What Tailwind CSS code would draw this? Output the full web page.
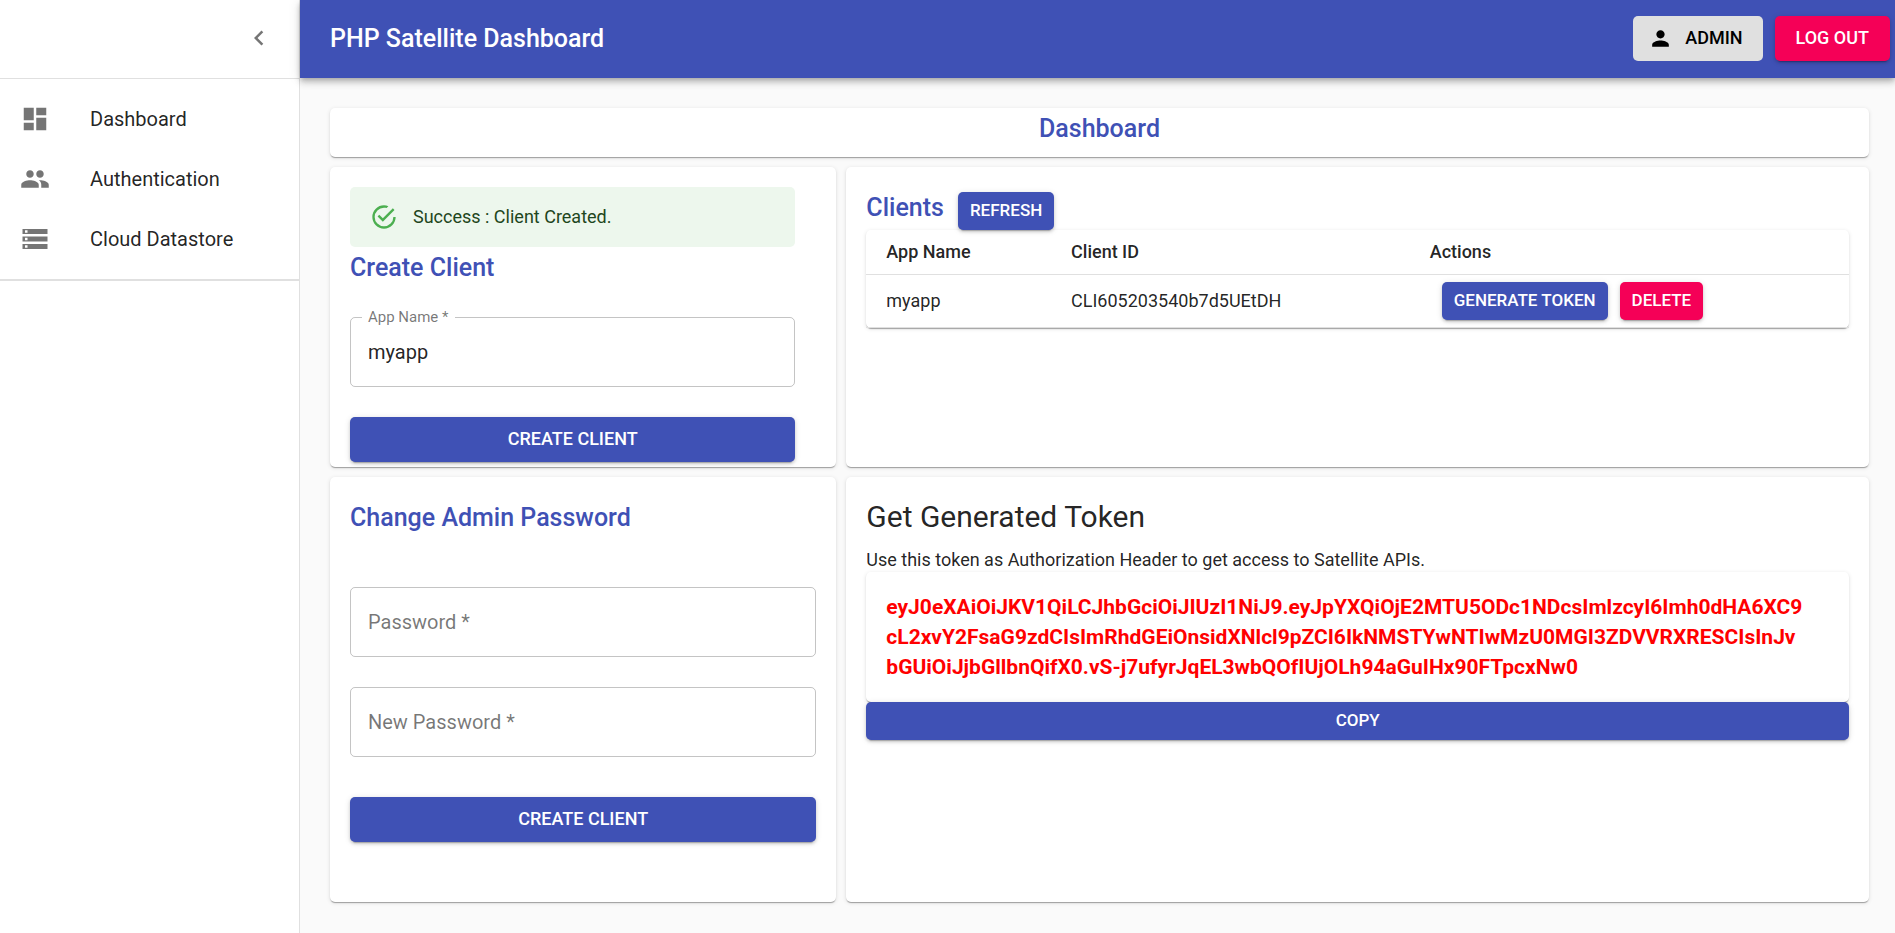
<!DOCTYPE html>
<html lang="en">
<head>
<meta charset="utf-8">
<meta name="viewport" content="width=device-width, initial-scale=1">
<title>PHP Satellite Dashboard</title>
<script src="https://cdn.jsdelivr.net/npm/@tailwindcss/browser@4"></script>
</head>
<body class="flex min-h-screen bg-[#fafafa] font-[Roboto,sans-serif] text-xl text-black/87">

<!-- Navigation drawer -->
<aside class="w-[300px] shrink-0 border-r border-black/12 bg-white">
  <div class="flex h-[78px] items-center justify-end pr-2.5 pb-0.5">
    <button type="button" aria-label="Close menu" class="p-[15px] text-black/54">
      <svg class="size-[30px]" viewBox="0 0 24 24" fill="currentColor" aria-hidden="true"><path d="M15.41 7.41L14 6l-6 6 6 6 1.41-1.41L10.83 12z"/></svg>
    </button>
  </div>
  <hr class="border-black/12">
  <nav class="border-b-2 border-black/12 py-2.5">
    <a href="#dashboard" class="flex h-[60px] items-center gap-10 px-5">
      <svg class="size-[30px] text-black/54" viewBox="0 0 24 24" fill="currentColor" aria-hidden="true"><path d="M3 13h8V3H3v10zm0 8h8v-6H3v6zm10 0h8V11h-8v10zm0-18v6h8V3h-8z"/></svg>
      <span>Dashboard</span>
    </a>
    <a href="#authentication" class="flex h-[60px] items-center gap-10 px-5">
      <svg class="size-[30px] text-black/54" viewBox="0 0 24 24" fill="currentColor" aria-hidden="true"><path d="M16 11c1.66 0 2.99-1.34 2.99-3S17.66 5 16 5c-1.66 0-3 1.34-3 3s1.34 3 3 3zm-8 0c1.66 0 2.99-1.34 2.99-3S9.66 5 8 5C6.34 5 5 6.34 5 8s1.34 3 3 3zm0 2c-2.33 0-7 1.17-7 3.5V19h14v-2.5c0-2.33-4.67-3.5-7-3.5zm8 0c-.29 0-.62.02-.97.05 1.16.84 1.97 1.97 1.97 3.45V19h6v-2.5c0-2.33-4.67-3.5-7-3.5z"/></svg>
      <span>Authentication</span>
    </a>
    <a href="#datastore" class="flex h-[60px] items-center gap-10 px-5">
      <svg class="size-[30px] text-black/54" viewBox="0 0 24 24" fill="currentColor" aria-hidden="true"><path d="M2 20h20v-4H2v4zm2-3h2v2H4v-2zM2 4v4h20V4H2zm4 3H4V5h2v2zm-4 7h20v-4H2v4zm2-3h2v2H4v-2z"/></svg>
      <span>Cloud Datastore</span>
    </a>
  </nav>
</aside>

<div class="flex min-w-0 flex-1 flex-col">
  <!-- App bar -->
  <header class="z-10 flex h-[78px] items-center gap-3 bg-[#3f51b5] pr-[5px] pb-0.5 pl-[30px] shadow-[0_2px_5px_-1px_rgba(0,0,0,0.2),0_5px_6px_0_rgba(0,0,0,0.14),0_1px_12px_0_rgba(0,0,0,0.12)]">
    <h1 class="flex-1 text-[25px] font-medium text-white">PHP Satellite Dashboard</h1>
    <button type="button" class="flex h-[45px] items-center gap-3 rounded-[5px] bg-[#e0e0e0] pr-5 pl-[15px] text-lg font-medium text-black">
      <svg class="size-[25px]" viewBox="0 0 24 24" fill="currentColor" aria-hidden="true"><path d="M12 12c2.21 0 4-1.79 4-4s-1.79-4-4-4-4 1.79-4 4 1.79 4 4 4zm0 2c-2.67 0-8 1.34-8 4v2h16v-2c0-2.66-5.33-4-8-4z"/></svg>
      ADMIN
    </button>
    <button type="button" class="h-[45px] rounded-[5px] bg-[#f50057] px-[21px] text-lg font-medium text-white shadow-[0_4px_1px_-3px_rgba(0,0,0,0.2),0_2px_3px_0_rgba(0,0,0,0.14),0_1px_6px_0_rgba(0,0,0,0.12)]">LOG OUT</button>
  </header>

  <main class="grid grid-cols-3 gap-2.5 pt-[30px] pr-[26px] pb-[30px] pl-[30px]">
    <div class="col-span-3 h-[49px] rounded-[5px] bg-white text-center shadow-[0_2px_1px_-1px_rgba(0,0,0,0.2),0_1px_1px_0_rgba(0,0,0,0.14),0_1px_4px_0_rgba(0,0,0,0.12)]">
      <h2 class="text-[25px] leading-[42px] font-medium text-[#3f51b5]">Dashboard</h2>
    </div>

    <!-- Create client -->
    <section class="rounded-[5px] bg-white px-5 pt-5 pb-[5px] shadow-[0_2px_1px_-1px_rgba(0,0,0,0.2),0_1px_1px_0_rgba(0,0,0,0.14),0_1px_4px_0_rgba(0,0,0,0.12)]">
      <form class="mr-[21px] flex flex-col">
        <div role="alert" class="flex h-[60px] items-center gap-[15px] rounded-[5px] bg-[#edf7ed] px-5 text-lg text-[#1e4620]">
          <svg class="size-7 text-[#4caf50]" viewBox="0 0 24 24" fill="currentColor" aria-hidden="true"><path d="M20,12A8,8 0 0,1 12,20A8,8 0 0,1 4,12A8,8 0 0,1 12,4C12.76,4 13.5,4.11 14.2,4.31L15.77,2.74C14.61,2.26 13.34,2 12,2A10,10 0 0,0 2,12A10,10 0 0,0 12,22A10,10 0 0,0 22,12M7.91,10.08L6.5,11.5L11,16L21,6L19.59,4.58L11,13.17L7.91,10.08Z"/></svg>
          Success : Client Created.
        </div>
        <h3 class="text-[25px] leading-[42px] font-medium text-[#3f51b5]">Create Client</h3>
        <div class="relative mt-7 mb-[30px]">
          <input id="app-name" type="text" value="myapp" required class="h-[70px] w-full rounded-[5px] border border-black/23 px-[17px] outline-none">
          <label for="app-name" class="absolute -top-2.5 left-3 bg-white px-1.5 text-[15px] leading-5 text-black/54">App Name *</label>
        </div>
        <button type="submit" class="h-[45px] rounded-[5px] bg-[#3f51b5] pb-0.5 text-lg font-medium text-white shadow-[0_4px_1px_-3px_rgba(0,0,0,0.2),0_2px_3px_0_rgba(0,0,0,0.14),0_1px_6px_0_rgba(0,0,0,0.12)]">CREATE CLIENT</button>
      </form>
    </section>

    <!-- Client list -->
    <section class="col-span-2 rounded-[5px] bg-white px-5 pt-5 shadow-[0_2px_1px_-1px_rgba(0,0,0,0.2),0_1px_1px_0_rgba(0,0,0,0.14),0_1px_4px_0_rgba(0,0,0,0.12)]">
      <div class="flex items-start gap-3.5">
        <h3 class="text-[25px] leading-[42px] font-medium text-[#3f51b5]">Clients</h3>
        <button type="button" class="mt-[5px] h-[38px] rounded-[5px] bg-[#3f51b5] px-3 text-[17px] font-medium text-white shadow-[0_4px_1px_-3px_rgba(0,0,0,0.2),0_2px_3px_0_rgba(0,0,0,0.14),0_1px_6px_0_rgba(0,0,0,0.12)]">REFRESH</button>
      </div>
      <div class="rounded-[5px] shadow-[0_2px_1px_-1px_rgba(0,0,0,0.2),0_1px_1px_0_rgba(0,0,0,0.14),0_1px_4px_0_rgba(0,0,0,0.12)]">
        <table class="w-full text-left text-lg">
          <thead>
            <tr class="h-11 border-b border-[#e0e0e0]">
              <th class="w-[18.8%] px-5 font-medium">App Name</th>
              <th class="w-[36.5%] px-5 font-medium">Client ID</th>
              <th class="px-5 font-medium">Actions</th>
            </tr>
          </thead>
          <tbody>
            <tr class="h-[53px] border-b border-[#e0e0e0]">
              <td class="px-5">myapp</td>
              <td class="px-5">CLI605203540b7d5UEtDH</td>
              <td class="px-5">
                <div class="flex gap-3 pl-3">
                  <button type="button" class="h-[38px] rounded-[5px] bg-[#3f51b5] px-3 text-[17px] font-medium text-white shadow-[0_4px_1px_-3px_rgba(0,0,0,0.2),0_2px_3px_0_rgba(0,0,0,0.14),0_1px_6px_0_rgba(0,0,0,0.12)]">GENERATE TOKEN</button>
                  <button type="button" class="h-[38px] rounded-[5px] bg-[#f50057] px-3 text-[17px] font-medium text-white shadow-[0_4px_1px_-3px_rgba(0,0,0,0.2),0_2px_3px_0_rgba(0,0,0,0.14),0_1px_6px_0_rgba(0,0,0,0.12)]">DELETE</button>
                </div>
              </td>
            </tr>
          </tbody>
        </table>
      </div>
    </section>

    <!-- Change admin password -->
    <section class="rounded-[5px] bg-white px-5 pt-5 pb-[60px] shadow-[0_2px_1px_-1px_rgba(0,0,0,0.2),0_1px_1px_0_rgba(0,0,0,0.14),0_1px_4px_0_rgba(0,0,0,0.12)]">
      <form class="flex flex-col">
        <h3 class="text-[25px] leading-[42px] font-medium text-[#3f51b5]">Change Admin Password</h3>
        <div class="relative mt-12">
          <input id="password" type="password" required class="h-[70px] w-full rounded-[5px] border border-black/23 px-[17px] outline-none">
          <label for="password" class="absolute top-5 left-[18px] leading-[30px] text-black/54">Password *</label>
        </div>
        <div class="relative mt-[30px]">
          <input id="new-password" type="password" required class="h-[70px] w-full rounded-[5px] border border-black/23 px-[17px] outline-none">
          <label for="new-password" class="absolute top-5 left-[18px] leading-[30px] text-black/54">New Password *</label>
        </div>
        <button type="submit" class="mt-10 h-[45px] rounded-[5px] bg-[#3f51b5] pb-0.5 text-lg font-medium text-white shadow-[0_4px_1px_-3px_rgba(0,0,0,0.2),0_2px_3px_0_rgba(0,0,0,0.14),0_1px_6px_0_rgba(0,0,0,0.12)]">CREATE CLIENT</button>
      </form>
    </section>

    <!-- Generated token -->
    <section class="col-span-2 rounded-[5px] bg-white p-5 shadow-[0_2px_1px_-1px_rgba(0,0,0,0.2),0_1px_1px_0_rgba(0,0,0,0.14),0_1px_4px_0_rgba(0,0,0,0.12)]">
      <h3 class="mb-2.5 text-[30px] leading-10">Get Generated Token</h3>
      <p class="text-lg leading-[25px]">Use this token as Authorization Header to get access to Satellite APIs.</p>
      <p class="rounded-[5px] p-5 text-[21px] leading-[30px] font-bold break-all text-[#ff0000] shadow-[0_2px_1px_-1px_rgba(0,0,0,0.2),0_1px_1px_0_rgba(0,0,0,0.14),0_1px_4px_0_rgba(0,0,0,0.12)]">eyJ0eXAiOiJKV1QiLCJhbGciOiJIUzI1NiJ9.eyJpYXQiOjE2MTU5ODc1NDcsImlzcyI6Imh0dHA6XC9<br>cL2xvY2FsaG9zdCIsImRhdGEiOnsidXNlcl9pZCI6IkNMSTYwNTIwMzU0MGI3ZDVVRXRESCIsInJv<br>bGUiOiJjbGllbnQifX0.vS-j7ufyrJqEL3wbQOfIUjOLh94aGuIHx90FTpcxNw0</p>
      <button type="button" class="relative block h-[38px] w-full rounded-[5px] bg-[#3f51b5] text-[17px] font-medium text-white shadow-[0_4px_1px_-3px_rgba(0,0,0,0.2),0_2px_3px_0_rgba(0,0,0,0.14),0_1px_6px_0_rgba(0,0,0,0.12)]">COPY</button>
    </section>
  </main>
</div>
</body>
</html>
